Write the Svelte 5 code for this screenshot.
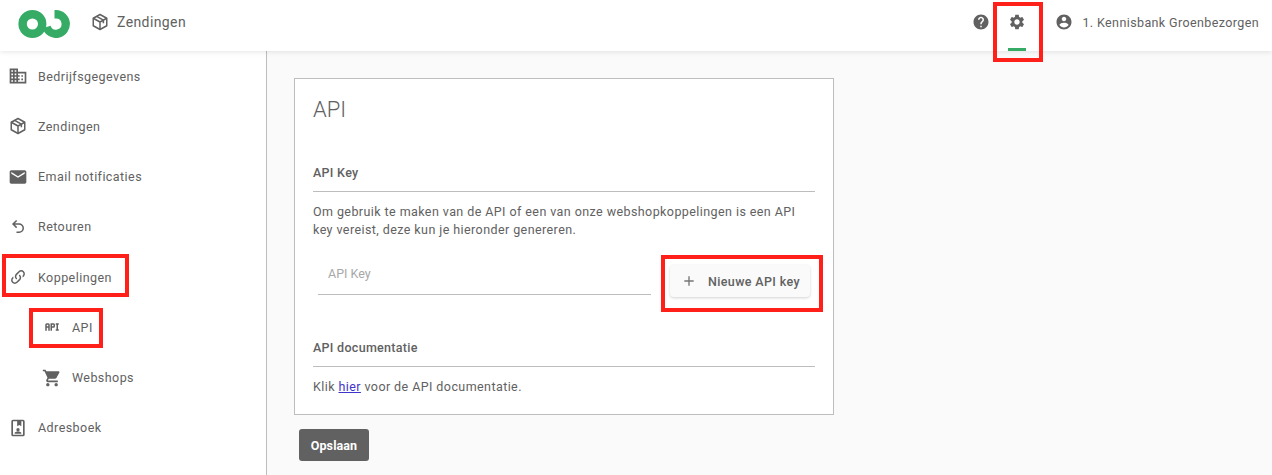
<script>
	const icons = {
		business: 'M12 7V3H2v18h20V7H12zM6 19H4v-2h2v2zm0-4H4v-2h2v2zm0-4H4V9h2v2zm0-4H4V5h2v2zm4 12H8v-2h2v2zm0-4H8v-2h2v2zm0-4H8V9h2v2zm0-4H8V5h2v2zm10 12h-8v-2h2v-2h-2v-2h2v-2h-2V9h8v10zm-2-8h-2v2h2v-2zm0 4h-2v2h2v-2z',
		mail: 'M20 4H4c-1.1 0-1.99.9-1.99 2L2 18c0 1.1.9 2 2 2h16c1.1 0 2-.9 2-2V6c0-1.1-.9-2-2-2zm0 4l-8 5-8-5V6l8 5 8-5v2z',
		undo: 'M13.5,7A6.5,6.5 0 0,1 20,13.5A6.5,6.5 0 0,1 13.5,20H10V18H13.5C16,18 18,16 18,13.5C18,11 16,9 13.5,9H7.83L10.91,12.09L9.5,13.5L4,8L9.5,2.5L10.92,3.91L7.83,7H13.5Z',
		link: 'M10.59,13.41C11,13.8 11,14.44 10.59,14.83C10.2,15.22 9.56,15.22 9.17,14.83C7.22,12.88 7.22,9.71 9.17,7.76V7.76L12.71,4.22C14.66,2.27 17.83,2.27 19.78,4.22C21.73,6.17 21.73,9.34 19.78,11.29L18.29,12.78C18.3,11.96 18.17,11.14 17.89,10.36L18.36,9.88C19.54,8.71 19.54,6.81 18.36,5.64C17.19,4.46 15.29,4.46 14.12,5.64L10.59,9.17C9.41,10.34 9.41,12.24 10.59,13.41M13.41,9.17C13.8,8.78 14.44,8.78 14.83,9.17C16.78,11.12 16.78,14.29 14.83,16.24V16.24L11.29,19.78C9.34,21.73 6.17,21.73 4.22,19.78C2.27,17.83 2.27,14.66 4.22,12.71L5.71,11.22C5.7,12.04 5.83,12.86 6.11,13.65L5.64,14.12C4.46,15.29 4.46,17.19 5.64,18.36C6.81,19.54 8.71,19.54 9.88,18.36L13.41,14.83C14.59,13.66 14.59,11.76 13.41,10.59C13,10.2 13,9.56 13.41,9.17Z',
		api: 'M7 7H5A2 2 0 0 0 3 9V17H5V13H7V17H9V9A2 2 0 0 0 7 7M7 11H5V9H7M14 7H10V17H12V13H14A2 2 0 0 0 16 11V9A2 2 0 0 0 14 7M14 11H12V9H14M20 9V15H21V17H17V15H18V9H17V7H21V9Z',
		cart: 'M7 18c-1.1 0-1.99.9-1.99 2S5.9 22 7 22s2-.9 2-2-.9-2-2-2zM1 2v2h2l3.6 7.59-1.35 2.45c-.16.28-.25.61-.25.96 0 1.1.9 2 2 2h12v-2H7.42c-.14 0-.25-.11-.25-.25l.03-.12.9-1.63h7.45c.75 0 1.41-.41 1.75-1.03l3.58-6.49c.08-.14.12-.31.12-.48 0-.55-.45-1-1-1H5.21l-.94-2H1zm16 16c-1.1 0-1.99.9-1.99 2s.89 2 1.99 2 2-.9 2-2-.9-2-2-2z',
		book: 'M6 2h12a2 2 0 0 1 2 2v16a2 2 0 0 1-2 2H6a2 2 0 0 1-2-2V4a2 2 0 0 1 2-2zm0 2v16h12V4h-2v6l-2.5-1.5L11 10V4H6zm6 8a2 2 0 1 1 0 4 2 2 0 0 1 0-4zm-4 7v-1c0-1.2 2.4-1.8 4-1.8s4 .6 4 1.8v1H8z',
		help: 'M12 2C6.48 2 2 6.48 2 12s4.48 10 10 10 10-4.48 10-10S17.52 2 12 2zm1 17h-2v-2h2v2zm2.07-7.75l-.9.92C13.45 12.9 13 13.5 13 15h-2v-.5c0-1.1.45-2.1 1.17-2.83l1.24-1.26c.37-.36.59-.86.59-1.41 0-1.1-.9-2-2-2s-2 .9-2 2H8c0-2.21 1.79-4 4-4s4 1.79 4 4c0 .88-.36 1.68-.93 2.25z',
		settings: 'M19.14 12.94c.04-.3.06-.61.06-.94 0-.32-.02-.64-.07-.94l2.03-1.58c.18-.14.23-.41.12-.61l-1.92-3.32c-.12-.22-.37-.29-.59-.22l-2.39.96c-.5-.38-1.03-.7-1.62-.94l-.36-2.54c-.04-.24-.24-.41-.48-.41h-3.84c-.24 0-.43.17-.47.41l-.36 2.54c-.59.24-1.13.57-1.62.94l-2.39-.96c-.22-.08-.47 0-.59.22L2.74 8.87c-.12.21-.08.47.12.61l2.03 1.58c-.05.3-.09.63-.09.94s.02.64.07.94l-2.03 1.58c-.18.14-.23.41-.12.61l1.92 3.32c.12.22.37.29.59.22l2.39-.96c.5.38 1.03.7 1.62.94l.36 2.54c.05.24.24.41.48.41h3.84c.24 0 .44-.17.47-.41l.36-2.54c.59-.24 1.13-.56 1.62-.94l2.39.96c.22.08.47 0 .59-.22l1.92-3.32c.12-.22.07-.47-.12-.61l-2.01-1.58zM12 15.6c-1.98 0-3.6-1.62-3.6-3.6s1.62-3.6 3.6-3.6 3.6 1.62 3.6 3.6-1.62 3.6-3.6 3.6z',
		account: 'M12 2C6.48 2 2 6.48 2 12s4.48 10 10 10 10-4.48 10-10S17.52 2 12 2zm0 3c1.66 0 3 1.34 3 3s-1.34 3-3 3-3-1.34-3-3 1.34-3 3-3zm0 14.2c-2.5 0-4.71-1.28-6-3.22.03-1.99 4-3.08 6-3.08 1.99 0 5.97 1.09 6 3.08-1.29 1.94-3.5 3.22-6 3.22z'
	};

	const menu = [
		{ label: 'Bedrijfsgegevens', icon: 'business' },
		{ label: 'Zendingen', icon: 'box' },
		{ label: 'Email notificaties', icon: 'mail' },
		{ label: 'Retouren', icon: 'undo', small: true },
		{ label: 'Koppelingen', icon: 'link', small: true },
		{ label: 'API', icon: 'api', small: true, sub: true },
		{ label: 'Webshops', icon: 'cart', sub: true },
		{ label: 'Adresboek', icon: 'book' }
	];
</script>

{#snippet box()}
	<svg class="cube" viewBox="0 0 24 24" fill="none" stroke="#616161" stroke-width="2" stroke-linejoin="round">
		<path d="M12 2l9 5v10l-9 5-9-5V7z" />
		<path d="M3 7l9 5 9-5M12 12v10M7.5 4.5l9 5v4" />
	</svg>
{/snippet}

<div class="page">
	<header class="topbar">
		<svg class="logo" viewBox="0 0 53 28" fill="none" stroke="#36ab66" stroke-width="8.4">
			<circle cx="14.4" cy="14" r="9.8" />
			<path d="M36.5 4.2h1.5A9.8 9.8 0 1 1 28.6 17" />
		</svg>
		<div class="crumb">
			{@render box()}
			<span>Zendingen</span>
		</div>
		<div class="actions">
			<button class="iconbtn" type="button" aria-label="Help">
				<svg class="icon small" viewBox="0 0 24 24"><path d={icons.help} /></svg>
			</button>
			<button class="iconbtn settings" type="button" aria-label="Instellingen">
				<svg class="icon small" viewBox="0 0 24 24"><path d={icons.settings} /></svg>
			</button>
			<div class="user">
				<svg class="icon small" viewBox="0 0 24 24"><path d={icons.account} /></svg>
				<span>1. Kennisbank Groenbezorgen</span>
			</div>
		</div>
	</header>

	<div class="body">
		<nav class="sidebar">
			{#each menu as item}
				<div class="item" class:sub={item.sub}>
					{#if item.icon === 'box'}
						{@render box()}
					{:else}
						<svg class="icon" class:small={item.small} viewBox="0 0 24 24"><path d={icons[item.icon]} /></svg>
					{/if}
					<span>{item.label}</span>
				</div>
			{/each}
		</nav>

		<main class="content">
			<section class="card">
				<h1>API</h1>
				<h2 class="first">API Key</h2>
				<p>Om gebruik te maken van de API of een van onze webshopkoppelingen is een API key vereist, deze kun je hieronder genereren.</p>
				<div class="keyrow">
					<label class="field">
						<input type="text" placeholder="API Key" />
					</label>
					<button class="newkey" type="button">
						<svg viewBox="0 0 24 24"><path d="M19 13h-6v6h-2v-6H5v-2h6V5h2v6h6v2z" /></svg>
						Nieuwe API key
					</button>
				</div>
				<h2>API documentatie</h2>
				<p>Klik <a href="#docs">hier</a> voor de API documentatie.</p>
			</section>
			<button class="save" type="button">Opslaan</button>
		</main>
	</div>

	<div class="mark m-settings"></div>
	<div class="mark m-link"></div>
	<div class="mark m-api"></div>
	<div class="mark m-key"></div>
</div>

<style>
	:global(body) {
		margin: 0;
		background: #fafafa;
	}
	.page {
		position: relative;
		height: 475px;
		overflow: hidden;
		font-family: Roboto, "Liberation Sans", sans-serif;
		color: #616161;
	}
	.topbar {
		position: relative;
		z-index: 2;
		display: flex;
		align-items: center;
		height: 51px;
		padding: 0 13px 0 18px;
		box-sizing: border-box;
		background: #fff;
		box-shadow: 0 1px 5px rgba(0, 0, 0, 0.1);
	}
	.logo {
		width: 53px;
		height: 28px;
		margin-top: -3px;
	}
	.crumb {
		display: flex;
		align-items: center;
		gap: 8px;
		margin-left: 20px;
		margin-top: -7px;
		font-size: 14px;
		letter-spacing: 0.4px;
	}
	.icon {
		width: 20px;
		height: 20px;
		flex-shrink: 0;
		fill: #616161;
	}
	.icon.small {
		width: 18px;
		height: 18px;
		margin: 0 1px;
	}
	.cube {
		width: 18px;
		height: 18px;
		flex-shrink: 0;
	}
	.item .cube {
		margin: 0 1px;
	}
	.actions {
		display: flex;
		align-items: center;
		margin-left: auto;
		height: 100%;
	}
	.iconbtn {
		display: flex;
		align-items: center;
		justify-content: center;
		position: relative;
		height: 100%;
		width: 20px;
		padding: 0 0 7px;
		border: 0;
		background: none;
	}
	.settings {
		width: 18px;
		margin-left: 17px;
	}
	.settings::after {
		content: "";
		position: absolute;
		left: 0;
		bottom: 0;
		width: 18px;
		height: 3px;
		background: #36ab66;
	}
	.user {
		display: flex;
		align-items: center;
		gap: 8px;
		margin-left: 28px;
		margin-top: -7px;
		font-size: 12.5px;
		letter-spacing: 0.39px;
	}
	.body {
		display: flex;
		height: 424px;
	}
	.sidebar {
		width: 266px;
		height: 100%;
		flex-shrink: 0;
		border-right: 1px solid #bdbdbd;
		background: #fff;
	}
	.item {
		display: flex;
		align-items: center;
		gap: 10px;
		height: 50.25px;
		padding-left: 8px;
		font-size: 12.5px;
		letter-spacing: 0.44px;
	}
	.item.sub {
		padding-left: 42px;
	}
	.content {
		flex: 1;
		padding: 27px 0 0 27px;
	}
	.card {
		box-sizing: border-box;
		width: 540px;
		height: 337px;
		padding: 0 18px;
		border: 1px solid #bdbdbd;
		background: #fff;
	}
	h1 {
		margin: 17px 0 0;
		font-size: 22px;
		line-height: 28px;
		font-weight: 300;
		color: #616161;
	}
	h2 {
		margin: 0;
		padding-bottom: 11px;
		border-bottom: 1px solid #bdbdbd;
		font-size: 12.5px;
		line-height: 15px;
		font-weight: 500;
		letter-spacing: 0.3px;
		color: #616161;
	}
	h2.first {
		margin-top: 41px;
	}
	p {
		margin: 11px 0 0;
		font-size: 12.5px;
		line-height: 18px;
		letter-spacing: 0.42px;
	}
	a {
		color: #3f35c9;
	}
	.keyrow {
		display: flex;
		align-items: flex-start;
		margin-top: 7px;
		padding-left: 5px;
		height: 94px;
	}
	.field {
		display: block;
		width: 333px;
		flex-shrink: 0;
	}
	input {
		display: block;
		box-sizing: border-box;
		width: 100%;
		height: 49px;
		padding: 6px 10px 0;
		border: 0;
		border-bottom: 1px solid #bdbdbd;
		outline: none;
		background: transparent;
		font: inherit;
		font-size: 12.5px;
	}
	input::placeholder {
		color: #a8a8a8;
		opacity: 1;
	}
	.newkey {
		display: flex;
		align-items: center;
		gap: 11px;
		width: 140px;
		height: 32px;
		margin: 19px 0 0 19px;
		padding: 0 0 0 11px;
		border: 0;
		border-radius: 4px;
		background: #fafafa;
		box-shadow: 0 1px 3px rgba(0, 0, 0, 0.18);
		font: inherit;
		font-size: 12.5px;
		font-weight: 500;
		letter-spacing: 0.36px;
		color: #616161;
	}
	.newkey svg {
		width: 16px;
		height: 16px;
		fill: #757575;
	}
	.save {
		display: block;
		width: 70px;
		height: 32px;
		margin: 14px 0 0 5px;
		padding: 0;
		border: 0;
		border-radius: 3px;
		background: #616161;
		color: #fff;
		font: inherit;
		font-size: 12.5px;
		font-weight: 700;
		letter-spacing: 0.1px;
	}
	.mark {
		position: absolute;
		z-index: 3;
		box-sizing: border-box;
		border: 4px solid #fe2019;
		pointer-events: none;
	}
	.m-settings { left: 993px; top: 2px; width: 50px; height: 60px; }
	.m-link { left: 2px; top: 254px; width: 127px; height: 43px; }
	.m-api { left: 29px; top: 308px; width: 74px; height: 40px; }
	.m-key { left: 661px; top: 255px; width: 162px; height: 57px; }
</style>
